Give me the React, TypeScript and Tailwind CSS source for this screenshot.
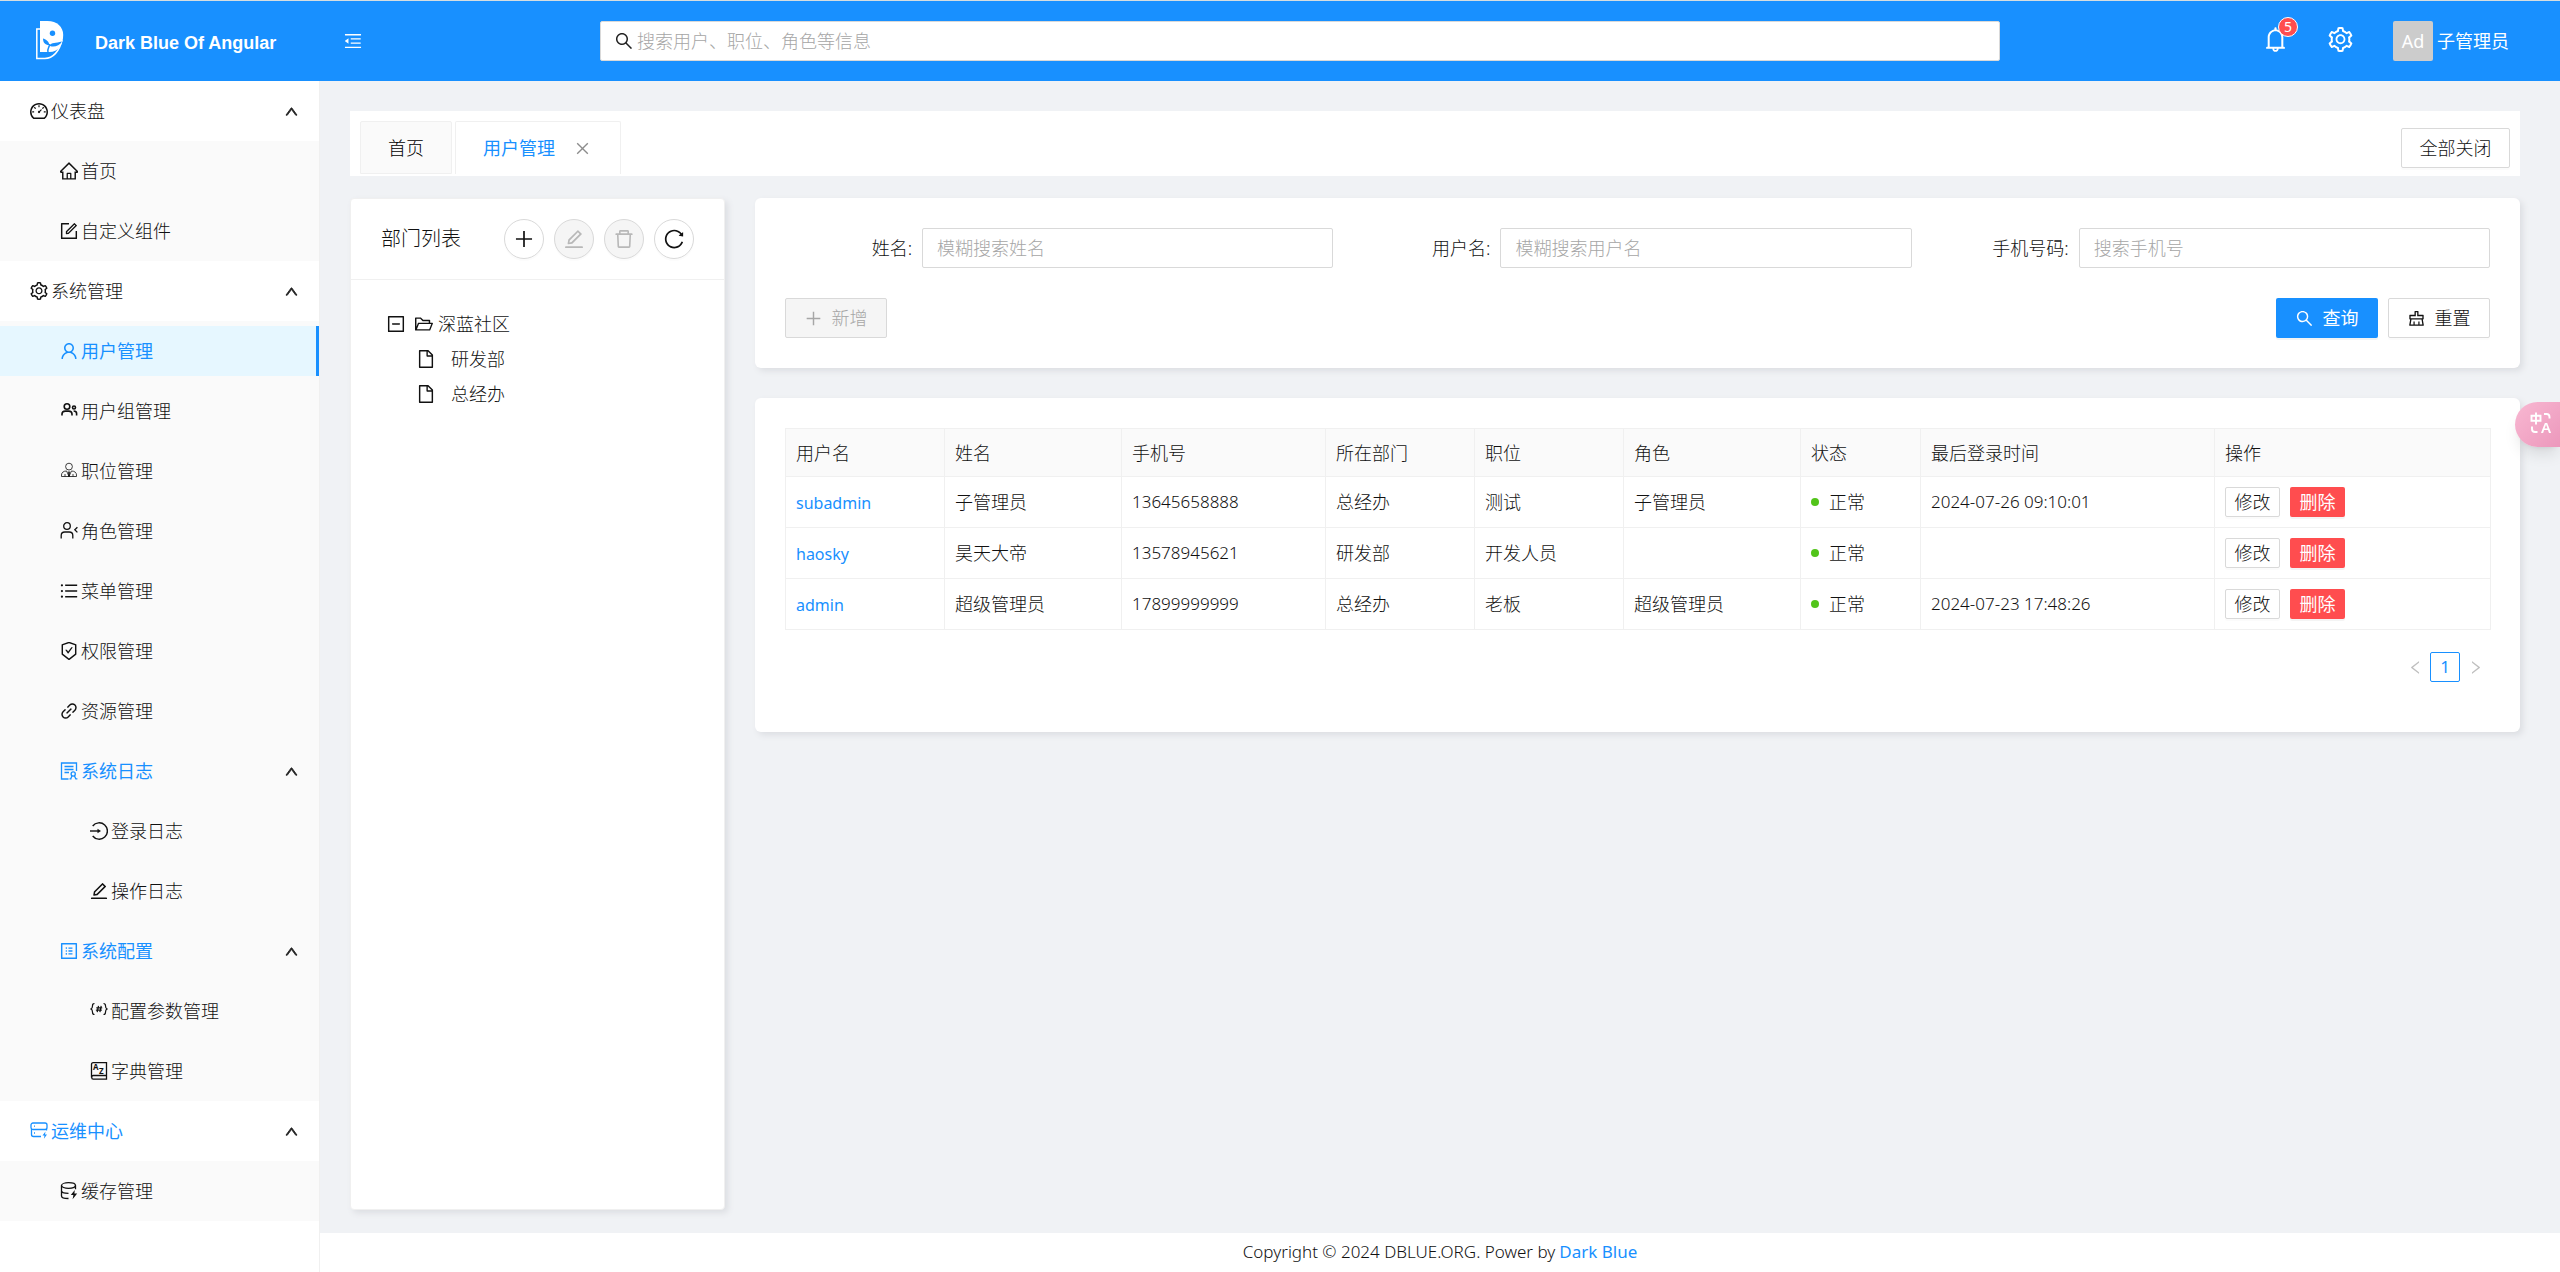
import React, { useState } from 'react';
import type { IconType } from 'react-icons';
import {
  AiOutlineBell, AiOutlineClear, AiOutlineClose, AiOutlineDashboard, AiOutlineDelete, AiOutlineEdit,
  AiOutlineFile, AiOutlineFolderOpen, AiOutlineForm, AiOutlineHome, AiOutlineLeft, AiOutlineLink,
  AiOutlineMenuFold, AiOutlineMinusSquare, AiOutlinePlus, AiOutlineProfile, AiOutlineReload,
  AiOutlineRight, AiOutlineSafetyCertificate, AiOutlineSearch, AiOutlineSetting,
  AiOutlineUnorderedList, AiOutlineUp, AiOutlineUser,
} from 'react-icons/ai';

type IconProps = { className?: string };

// trim the empty margin that the icon set leaves round its glyphs
const ant = (Icon: IconType): React.FC<IconProps> => ({ className }) => (
  <Icon className={className} viewBox="64 64 896 896" />
);

const BellIcon = ant(AiOutlineBell);
const ClearIcon = ant(AiOutlineClear);
const CloseIcon = ant(AiOutlineClose);
const DashboardIcon = ant(AiOutlineDashboard);
const DeleteIcon = ant(AiOutlineDelete);
const EditIcon = ant(AiOutlineEdit);
const FileIcon = ant(AiOutlineFile);
const FolderIcon = ant(AiOutlineFolderOpen);
const FormIcon = ant(AiOutlineForm);
const HomeIcon = ant(AiOutlineHome);
const LeftIcon = ant(AiOutlineLeft);
const LinkIcon = ant(AiOutlineLink);
const FoldIcon = ant(AiOutlineMenuFold);
const MinusIcon = ant(AiOutlineMinusSquare);
const PlusIcon = ant(AiOutlinePlus);
const ProfileIcon = ant(AiOutlineProfile);
const ReloadIcon = ant(AiOutlineReload);
const RightIcon = ant(AiOutlineRight);
const SafetyIcon = ant(AiOutlineSafetyCertificate);
const SearchIcon = ant(AiOutlineSearch);
const SettingIcon = ant(AiOutlineSetting);
const ListIcon = ant(AiOutlineUnorderedList);
const UpIcon = ant(AiOutlineUp);
const UserIcon = ant(AiOutlineUser);

const GroupIcon = ({ className }: IconProps) => (
  <svg className={className} viewBox="0 0 18 18" fill="none" stroke="currentColor" strokeWidth="1.6">
    <circle cx="7" cy="4.5" r="2.8" />
    <path d="M2 13.500v-1.400c0-2 1.400-3 3.300-3h3.400c1.900 0 3.300 1 3.300 3v1.400" />
    <circle cx="14" cy="5.500" r="1.500" />
    <path d="M13.600 9c1.900 0 3 .9 3 2.500v2" />
  </svg>
);

const PositionIcon = ({ className }: IconProps) => (
  <svg className={className} viewBox="0 0 18 18" fill="none" stroke="currentColor" strokeWidth="0.8">
    <circle cx="9" cy="4.600" r="3.400" />
    <path d="M6.600 9C3.400 9 1.500 10.600 1.500 13v1.500h15V13c0-2.400-1.900-4-5.100-4L9 14.500z" />
    <path d="M9 9.500v5" strokeWidth="1.600" />
    <path d="M5 12v2.500M13 12v2.500" />
  </svg>
);

const RoleIcon = ({ className }: IconProps) => (
  <svg className={className} viewBox="0 0 18 18" fill="none" stroke="currentColor" strokeWidth="1.300">
    <circle cx="7" cy="4" r="3.300" />
    <path d="M1.200 16.500v-3c0-2.200 1.400-3.500 3.600-3.500h4.400c2.200 0 3.600 1.300 3.600 3.500v3" />
    <path d="M17.400 5.200l-2.600 2.600 2.600 2.600" />
  </svg>
);

const LogIcon = ({ className }: IconProps) => (
  <svg className={className} viewBox="0 0 18 18" fill="none" stroke="currentColor" strokeWidth="1.300">
    <path d="M8.500 17H1.500V1h15v8" />
    <path d="M4.500 4.500h9M4.500 7.500h9M4.500 10.500h4.500" />
    <circle cx="13.200" cy="12" r="2.100" />
    <path d="M12 13.700l-1.400 3.600M14.400 13.700l1.600 3.600M9.500 16.900h2M15.400 16.900h2" />
  </svg>
);

const LoginLogIcon = ({ className }: IconProps) => (
  <svg className={className} viewBox="0 0 18 18" fill="none" stroke="currentColor" strokeWidth="1.400">
    <path d="M2.700 4a8.200 8.200 0 1 1 0 10" />
    <path d="M0 9h9" />
    <path d="M7.500 6.800L11 9l-3.500 2.200z" fill="currentColor" stroke="none" />
  </svg>
);

const ParamIcon = ({ className }: IconProps) => (
  <svg className={className} viewBox="0 0 18 18" fill="none" stroke="currentColor" strokeWidth="1.200">
    <path d="M4.500 1.500c-1.800 0-2 .6-2 2.200S2.300 6.500 1 7c1.300.5 1.500 1.500 1.500 3.200s.2 2.300 2 2.300" />
    <path d="M13.500 1.500c1.800 0 2 .6 2 2.200s.2 2.800 1.500 3.300c-1.300.5-1.500 1.500-1.500 3.200s-.2 2.300-2 2.300" />
    <path d="M8.500 3.800L7.200 10.200M11.200 3.800L9.900 10.200M6.300 5.800h5.900M5.900 8.200h5.900" />
  </svg>
);

const DictIcon = ({ className }: IconProps) => (
  <svg className={className} viewBox="0 0 18 18" fill="none" stroke="currentColor" strokeWidth="1.300">
    <path d="M16.500 13.500H3.200c-2 0-2 3.700 0 3.700h13.300V.7H3.200C2 .7 1.500 1.400 1.500 2.400v13" />
    <text x="3" y="8.200" fontSize="8" fontWeight="700" fill="currentColor" stroke="none">A</text>
    <text x="9" y="12" fontSize="8" fontWeight="700" fill="currentColor" stroke="none">Z</text>
  </svg>
);

const ServerIcon = ({ className }: IconProps) => (
  <svg className={className} viewBox="0 0 18 18" fill="none" stroke="currentColor" strokeWidth="1.300">
    <rect x="1" y="1" width="16" height="6.500" rx="2" />
    <path d="M1.500 7v5.500c0 1.300.8 2 2 2H11M16.500 7v1.500M4 4.200h1M4 11h1" />
    <path d="M15.500 9.500l-3 4h2l-.6 3.200 3.100-4.200h-2z" fill="currentColor" stroke="none" />
  </svg>
);

const CacheIcon = ({ className }: IconProps) => (
  <svg className={className} viewBox="0 0 18 18" fill="none" stroke="currentColor" strokeWidth="1.300">
    <ellipse cx="8.500" cy="3.500" rx="7" ry="2.800" />
    <path d="M1.500 3.500v10.400c0 1.500 2.800 2.600 7 2.600M15.500 3.500v3.700M1.500 8.700c0 1.500 2.800 2.600 7 2.600" />
    <path d="M14.800 8l-4 5h2.600l-.8 4.200 4.600-5.700h-2.800z" fill="currentColor" stroke="none" />
  </svg>
);

const Logo = ({ className }: IconProps) => (
  <svg className={className} viewBox="0 0 28 40">
    <path d="M4 8H.8v29.500h8C17 37.500 23.500 30 26 19" fill="none" stroke="#fff" strokeWidth="1.500" />
    <path d="M4 0h7.500C21 0 27.200 6 27.200 14c0 9.500-5 17-13.700 17H4z" fill="#fff" />
    <circle cx="16.500" cy="12.300" r="2.700" fill="#1890ff" />
    <path d="M7 17.500c2.500.5 5.500 2.500 6.500 6.500-4 .3-6.500-2-6.500-6.500z" fill="#1890ff" />
    <path d="M13.500 24.500c2-3.500 6-2 12.500-4-2.500 4.500-8 6-12 4.500z" fill="#1890ff" />
    <path d="M13.500 23c.5 3-3 5-1.500 8.500" fill="none" stroke="#1890ff" strokeWidth="1.500" />
  </svg>
);

const TranslateIcon = ({ className }: IconProps) => (
  <svg className={className} viewBox="0 -6 24 34" fill="none" stroke="#fff" strokeWidth="1.900">
    <path d="M1.500 3.800h9v5h-9zM6 .5v12M14 2h2.500c2 0 3 1 3 3v1.500M2 14.500V17c0 2 1 3 3 3h2.500" />
    <text x="11" y="21" fontSize="15" fontWeight="600" fill="#fff" stroke="none">A</text>
  </svg>
);

interface MenuItem {
  label: string;
  icon: React.FC<IconProps>;
  tinted?: boolean;
  children?: MenuItem[];
}

const menus: MenuItem[] = [
  {
    label: '仪表盘',
    icon: DashboardIcon,
    children: [
      { label: '首页', icon: HomeIcon },
      { label: '自定义组件', icon: FormIcon },
    ],
  },
  {
    label: '系统管理',
    icon: SettingIcon,
    children: [
      { label: '用户管理', icon: UserIcon },
      { label: '用户组管理', icon: GroupIcon },
      { label: '职位管理', icon: PositionIcon },
      { label: '角色管理', icon: RoleIcon },
      { label: '菜单管理', icon: ListIcon },
      { label: '权限管理', icon: SafetyIcon },
      { label: '资源管理', icon: LinkIcon },
      {
        label: '系统日志',
        icon: LogIcon,
        tinted: true,
        children: [
          { label: '登录日志', icon: LoginLogIcon },
          { label: '操作日志', icon: EditIcon },
        ],
      },
      {
        label: '系统配置',
        icon: ProfileIcon,
        tinted: true,
        children: [
          { label: '配置参数管理', icon: ParamIcon },
          { label: '字典管理', icon: DictIcon },
        ],
      },
    ],
  },
  {
    label: '运维中心',
    icon: ServerIcon,
    tinted: true,
    children: [{ label: '缓存管理', icon: CacheIcon }],
  },
];

const indents = ['pl-[30px]', 'pl-[60px]', 'pl-[90px]'];

const users = [
  { username: 'subadmin', name: '子管理员', phone: '13645658888', dept: '总经办', position: '测试', role: '子管理员', lastLogin: '2024-07-26 09:10:01' },
  { username: 'haosky', name: '昊天大帝', phone: '13578945621', dept: '研发部', position: '开发人员', role: '', lastLogin: '' },
  { username: 'admin', name: '超级管理员', phone: '17899999999', dept: '总经办', position: '老板', role: '超级管理员', lastLogin: '2024-07-23 17:48:26' },
];

const columns = [
  { title: '用户名', width: 'w-[159px]' },
  { title: '姓名', width: 'w-[177px]' },
  { title: '手机号', width: 'w-[204px]' },
  { title: '所在部门', width: 'w-[149px]' },
  { title: '职位', width: 'w-[149px]' },
  { title: '角色', width: 'w-[177px]' },
  { title: '状态', width: 'w-[120px]' },
  { title: '最后登录时间', width: 'w-[294px]' },
  { title: '操作', width: 'w-[276px]' },
];

const searchFields = [
  { id: 'name', label: '姓名', placeholder: '模糊搜索姓名' },
  { id: 'username', label: '用户名', placeholder: '模糊搜索用户名' },
  { id: 'phone', label: '手机号码', placeholder: '搜索手机号' },
];

const deptActions = [
  { label: '新增部门', icon: PlusIcon, disabled: false },
  { label: '编辑部门', icon: EditIcon, disabled: true },
  { label: '删除部门', icon: DeleteIcon, disabled: true },
  { label: '刷新', icon: ReloadIcon, disabled: false },
];

const MenuNode: React.FC<{ item: MenuItem; level: number; active: string; onSelect: (label: string) => void }> = ({ item, level, active, onSelect }) => {
  const [open, setOpen] = useState(true);
  const Icon = item.icon;

  if (!item.children) {
    const isActive = active === item.label;
    return (
      <li className="py-[5px]">
        <a
          href="#"
          onClick={(e) => { e.preventDefault(); onSelect(item.label); }}
          className={`flex h-[50px] items-center gap-[3px] ${indents[level]} ${
            isActive ? 'border-r-[3px] border-[#1890ff] bg-[#e6f7ff] font-normal text-[#1890ff]' : 'font-light text-[#111] hover:text-[#1890ff]'
          }`}
        >
          <Icon className="size-[18px]" />
          <span>{item.label}</span>
        </a>
      </li>
    );
  }

  return (
    <li>
      <button
        onClick={() => setOpen(!open)}
        className={`flex h-[60px] w-full items-center gap-[3px] pr-[21px] ${indents[level]} ${item.tinted ? 'font-normal text-[#1890ff]' : ''}`}
      >
        <Icon className="size-[18px]" />
        <span>{item.label}</span>
        <UpIcon className={`ml-auto size-[13px] stroke-[60] text-[#222] ${open ? '' : 'rotate-180'}`} />
      </button>
      {open && (
        <ul className="bg-[#fafafa]">
          {item.children.map((child) => (
            <MenuNode key={child.label} item={child} level={level + 1} active={active} onSelect={onSelect} />
          ))}
        </ul>
      )}
    </li>
  );
};

const Header: React.FC = () => (
  <header className="flex h-[81px] items-center border-t border-[#d5dde0] bg-[#1890ff] font-normal text-white">
    <div className="flex w-80 items-center pl-9">
      <Logo className="h-10 w-7" />
      <h1 className="ml-[31px] pt-1 font-['Liberation_Sans',sans-serif] text-lg font-bold">Dark Blue Of Angular</h1>
    </div>
    <button aria-label="收起菜单" className="ml-6">
      <FoldIcon className="size-[18px]" />
    </button>
    <label className="mr-[263px] ml-[238px] flex h-10 flex-1 items-center gap-1 rounded-xs border border-[#d9d9d9] bg-white px-3.5">
      <SearchIcon className="size-[18px] text-[#222]" />
      <input type="text" aria-label="搜索" placeholder="搜索用户、职位、角色等信息" className="flex-1 font-light text-[#222] outline-none placeholder:text-[#a6a6a6]" />
    </label>
    <div className="flex items-center pr-[51px]">
      <button aria-label="通知" className="relative pb-1">
        <BellIcon className="size-[25px]" />
        <span className="absolute -top-2.5 left-[15px] flex size-5 items-center justify-center rounded-full border border-white bg-[#ff4d4f] text-sm leading-none">5</span>
      </button>
      <button aria-label="设置" className="ml-10 pb-1">
        <SettingIcon className="size-[25px]" />
      </button>
      <span className="ml-10 flex size-10 items-center justify-center rounded-xs bg-[#ccc]">Ad</span>
      <span className="ml-1">子管理员</span>
    </div>
  </header>
);

const DeptPanel: React.FC = () => (
  <section className="w-[375px] shrink-0 rounded-sm border border-[#f0f0f0] bg-white shadow-[3px_3px_6px_#dcdee2]">
    <div className="flex h-[81px] items-center justify-between border-b border-[#f0f0f0] px-[30px]">
      <h2 className="text-xl">部门列表</h2>
      <div className="flex gap-2.5">
        {deptActions.map(({ label, icon: Icon, disabled }) => (
          <button
            key={label}
            aria-label={label}
            disabled={disabled}
            className="flex size-10 items-center justify-center rounded-full border border-[#d9d9d9] shadow-[0_2px_0_#00000004] disabled:bg-[#f5f5f5] disabled:text-[#b8b8b8]"
          >
            <Icon className="size-5" />
          </button>
        ))}
      </div>
    </div>
    <ul className="px-9 pt-[29px]">
      <li>
        <div className="flex h-[30px] items-center">
          <MinusIcon className="size-[18px]" />
          <FolderIcon className="ml-2.5 size-[18px]" />
          <span className="ml-[5px]">深蓝社区</span>
        </div>
        <ul className="pl-[30px]">
          {['研发部', '总经办'].map((dept) => (
            <li key={dept} className="mt-[5px] flex h-[30px] items-center">
              <FileIcon className="size-[18px]" />
              <span className="ml-4">{dept}</span>
            </li>
          ))}
        </ul>
      </li>
    </ul>
  </section>
);

const SearchForm: React.FC = () => (
  <form onSubmit={(e) => e.preventDefault()} className="rounded-md bg-white p-[30px] shadow-[3px_3px_6px_#dcdee2]">
    <div className="grid grid-cols-3 gap-[30px]">
      {searchFields.map((f) => (
        <div key={f.id} className="flex items-center">
          <label htmlFor={f.id} className="w-1/4 pr-2.5 text-right">{f.label}:</label>
          <input id={f.id} type="text" placeholder={f.placeholder} className="h-10 w-3/4 rounded-xs border border-[#d9d9d9] px-3.5 outline-none placeholder:text-[#a6a6a6] focus:border-[#1890ff]" />
        </div>
      ))}
    </div>
    <div className="mt-[30px] flex gap-2.5">
      <button type="button" disabled className="mr-auto flex h-10 w-[102px] items-center justify-center gap-2.5 rounded-xs border border-[#d9d9d9] bg-[#f5f5f5] text-[#a6a6a6]">
        <PlusIcon className="size-[17px]" />
        新增
      </button>
      <button type="submit" className="flex h-10 w-[102px] items-center justify-center gap-2.5 rounded-xs bg-[#1890ff] font-normal text-white shadow-[0_2px_0_#0000000b]">
        <SearchIcon className="size-[17px]" />
        查询
      </button>
      <button type="reset" className="flex h-10 w-[102px] items-center justify-center gap-2.5 rounded-xs border border-[#d9d9d9] shadow-[0_2px_0_#00000004]">
        <ClearIcon className="size-[17px]" />
        重置
      </button>
    </div>
  </form>
);

const UserTable: React.FC = () => (
  <section className="mt-[30px] rounded-md bg-white px-[30px] pt-[30px] pb-[50px] shadow-[3px_3px_6px_#dcdee2]">
    <table className="w-full table-fixed border-collapse text-left">
      <thead>
        <tr className="h-12 bg-[#fafafa]">
          {columns.map((c) => (
            <th key={c.title} className={`border border-[#f0f0f0] px-2.5 font-[weight:inherit] ${c.width}`}>{c.title}</th>
          ))}
        </tr>
      </thead>
      <tbody>
        {users.map((u) => (
          <tr key={u.username} className="h-[51px] *:border *:border-[#f0f0f0] *:px-2.5">
            <td><a href="#" className="text-base font-normal text-[#1890ff]">{u.username}</a></td>
            <td>{u.name}</td>
            <td className="text-[17px]">{u.phone}</td>
            <td>{u.dept}</td>
            <td>{u.position}</td>
            <td>{u.role}</td>
            <td>
              <span className="flex items-center gap-2.5">
                <span className="size-2 rounded-full bg-[#52c41a]" />
                正常
              </span>
            </td>
            <td className="text-[17px]">{u.lastLogin}</td>
            <td>
              <div className="flex gap-2.5">
                <button className="h-[30px] w-[55px] rounded-xs border border-[#d9d9d9] shadow-[0_2px_0_#00000004]">修改</button>
                <button className="h-[30px] w-[55px] rounded-xs bg-[#ff4d4f] font-normal text-white shadow-[0_2px_0_#0000000b]">删除</button>
              </div>
            </td>
          </tr>
        ))}
      </tbody>
    </table>

    {/* Pagination */}
    <div className="mt-[22px] flex items-center justify-end text-[17px]">
      <button aria-label="上一页" disabled className="flex size-[30px] items-center justify-center text-[#bfbfbf]">
        <LeftIcon className="size-[15px]" />
      </button>
      <button className="size-[30px] rounded-xs border border-[#1890ff] font-normal text-[#1890ff]">1</button>
      <button aria-label="下一页" disabled className="flex size-[30px] items-center justify-center text-[#bfbfbf]">
        <RightIcon className="size-[15px]" />
      </button>
    </div>
  </section>
);

const App: React.FC = () => {
  const [active, setActive] = useState('用户管理');

  return (
    <div className="flex min-h-screen flex-col bg-[#f0f2f5] font-['Noto_Sans','Noto_Sans_CJK_SC',sans-serif] text-lg font-light text-[#111]">
      <Header />
      <div className="flex flex-1">
        <nav className="w-80 shrink-0 border-r border-[#f0f0f0] bg-white">
          <ul>
            {menus.map((m) => (
              <MenuNode key={m.label} item={m} level={0} active={active} onSelect={setActive} />
            ))}
          </ul>
        </nav>

        <div className="flex min-w-0 flex-1 flex-col">
          <main className="flex flex-1 flex-col px-[30px] pt-[30px] pr-10 pb-[23px]">
            {/* Tabs */}
            <div className="flex h-[65px] shrink-0 items-start gap-[3px] bg-white px-2.5 pt-2.5">
              <button className="h-[53px] rounded-t-xs border border-[#f0f0f0] bg-[#fafafa] px-[27px] text-black">首页</button>
              <div className="flex h-[53px] items-center gap-5 rounded-t-xs border border-b-0 border-[#f0f0f0] pr-[30px] pl-[27px] font-normal text-[#1890ff]">
                <button>用户管理</button>
                <button aria-label="关闭" className="text-[#8c8c8c]"><CloseIcon className="size-[15px]" /></button>
              </div>
              <button className="mt-[7px] ml-auto h-10 w-[109px] rounded-xs border border-[#d9d9d9] shadow-[0_2px_0_#00000004]">全部关闭</button>
            </div>

            <div className="mt-[22px] flex flex-1 gap-[30px]">
              <DeptPanel />
              <div className="min-w-0 flex-1">
                <SearchForm />
                <UserTable />
              </div>
            </div>
          </main>
          <footer className="flex h-[39px] items-center justify-center gap-1 bg-white text-[17px]">
            Copyright © 2024 DBLUE.ORG. Power by
            <a href="#" className="font-normal text-[#1890ff]">Dark Blue</a>
          </footer>
        </div>
      </div>

      <button aria-label="翻译" className="fixed top-[402px] right-0 flex h-[45px] w-[45px] items-center justify-center rounded-l-full bg-linear-to-br from-[#f8b8d2] to-[#ec98bc] pb-1 pl-2 shadow-lg">
        <TranslateIcon className="h-[34px] w-6" />
      </button>
    </div>
  );
};

export default App;
